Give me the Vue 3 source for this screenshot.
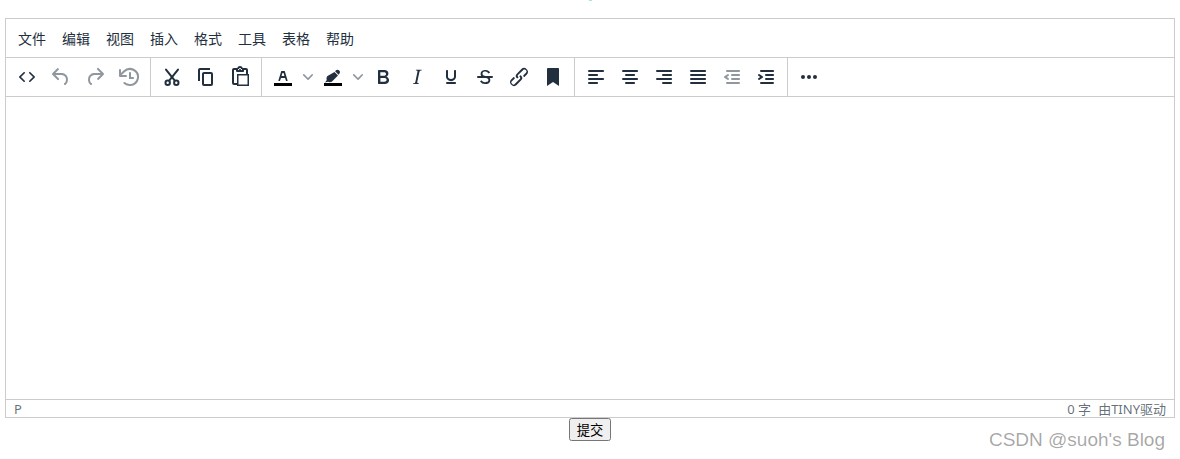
<template>
  <div class="page">
    <div class="top"><span class="top-mark"></span></div>
    <div class="editor">
      <div class="menubar">
        <button v-for="m in menus" :key="m" class="menu-item" type="button">{{ m }}</button>
      </div>
      <div class="toolbar">
        <div v-for="(group, i) in groups" :key="i" class="tool-group">
          <template v-for="tool in group" :key="tool.name">
            <span class="tool" :class="{ off: tool.off }">
              <svg width="24" height="24" viewBox="0 0 24 24">
                <rect v-if="tool.bar" x="3" y="18" width="18" height="3" fill="#000" />
                <path v-if="tool.d" :d="tool.d" />
                <g v-if="tool.name === 'cut'" class="cut-lines">
                  <circle cx="7.7" cy="17.7" r="2.2" />
                  <circle cx="16.3" cy="17.7" r="2.2" />
                  <line x1="6" y1="4.6" x2="14.6" y2="15.4" />
                  <line x1="18" y1="4.6" x2="9.4" y2="15.4" />
                </g>
              </svg>
            </span>
            <span v-if="tool.split" class="chevron">
              <svg width="10" height="10" viewBox="0 0 10 10"><path :d="chevron" /></svg>
            </span>
          </template>
        </div>
      </div>
      <div class="edit-area"></div>
      <div class="statusbar">
        <span class="path">p</span>
        <span class="status-right">
          <span class="count">0 字</span>
          <span class="brand">由TINY驱动</span>
        </span>
      </div>
    </div>
    <div class="actions">
      <button type="button" class="submit">提交</button>
    </div>
    <div class="watermark">CSDN @suoh's Blog</div>
  </div>
</template>

<script setup>
const menus = ["文件", "编辑", "视图", "插入", "格式", "工具", "表格", "帮助"];

const chevron =
  "M8.7 2.2c.3-.3.8-.3 1 0 .4.4.4.9 0 1.2L5.7 7.8c-.3.3-.9.3-1.2 0L.2 3.4a.8.8 0 0 1 0-1.2c.3-.3.8-.3 1.1 0L5 6l3.7-3.8z";

const groups = [
  [
    { name: "source", d: "M9.8 15.7c.3.3.3.8 0 1-.3.4-.9.4-1.2 0l-4.4-4.1a.8.8 0 0 1 0-1.2l4.4-4.2c.3-.3.9-.3 1.2 0 .3.3.3.8 0 1.1L6 12l3.8 3.7zM14.2 15.7c-.3.3-.3.8 0 1 .4.4.9.4 1.2 0l4.4-4.1c.3-.3.3-.9 0-1.2l-4.4-4.2a.8.8 0 0 0-1.2 0c-.3.3-.3.8 0 1.1L18 12l-3.8 3.7z" },
    { name: "undo", off: true, d: "M6.4 8H12c3.7 0 6.2 2 6.8 5.1.6 2.7-.4 5.6-2.3 6.8a1 1 0 0 1-1-1.8c1.1-.6 1.8-2.7 1.4-4.6-.5-2.1-2.1-3.5-4.9-3.5H6.4l3.3 3.3a1 1 0 1 1-1.4 1.4l-5-5a1 1 0 0 1 0-1.4l5-5a1 1 0 0 1 1.4 1.4L6.4 8z" },
    { name: "redo", off: true, d: "M17.6 10H12c-2.8 0-4.4 1.4-4.9 3.5-.4 2 .3 4 1.4 4.6a1 1 0 1 1-1 1.8c-2-1.2-2.9-4.1-2.3-6.8.6-3 3-5.1 6.8-5.1h5.6l-3.3-3.3a1 1 0 1 1 1.4-1.4l5 5a1 1 0 0 1 0 1.4l-5 5a1 1 0 0 1-1.4-1.4l3.3-3.3z" },
    { name: "restore", off: true, d: "M17 13c0 .6-.4 1-1 1h-4V8c0-.6.4-1 1-1s1 .4 1 1v4h2c.6 0 1 .4 1 1zM4.7 10H9a1 1 0 0 1 0 2H3a1 1 0 0 1-1-1V5a1 1 0 1 1 2 0v3l2.5-2.4a9.2 9.2 0 0 1 10.8-1.5A9 9 0 0 1 13.4 21c-2.4.1-4.7-.7-6.5-2.2a1 1 0 1 1 1.3-1.5 7.2 7.2 0 0 0 11.6-3.7 7 7 0 0 0-3.5-7.7A7.2 7.2 0 0 0 8 7L4.7 10z" },
  ],
  [
    { name: "cut" },
    { name: "copy", d: "M16 3H6a2 2 0 0 0-2 2v11h2V5h10V3zm1 4a2 2 0 0 1 2 2v10a2 2 0 0 1-2 2h-7a2 2 0 0 1-2-2V9c0-1.2.9-2 2-2h7zm0 12V9h-7v10h7z" },
    { name: "paste", d: "M18 9V5h-2v1c0 .6-.4 1-1 1H9a1 1 0 0 1-1-1V5H6v13h3V9h9zM9 20H6a2 2 0 0 1-2-2V5c0-1.1.9-2 2-2h3.2A3 3 0 0 1 12 1a3 3 0 0 1 2.8 2H18a2 2 0 0 1 2 2v4h1v12H9v-1zm1.5-9.5v9h9v-9h-9zM12 3a1 1 0 0 0-1 1c0 .5.4 1 1 1s1-.5 1-1-.4-1-1-1zm-2 2h4V4h-4v1z" },
  ],
  [
    { name: "forecolor", split: true, bar: true, d: "M8.7 16h-.8a.5.5 0 0 1-.5-.6l2.7-9c.1-.3.3-.4.5-.4h2.8c.2 0 .4.1.5.4l2.7 9a.5.5 0 0 1-.5.6h-.8a.5.5 0 0 1-.4-.4l-.7-2.2c0-.3-.3-.4-.5-.4h-3.4c-.2 0-.4.1-.5.4l-.7 2.2c0 .3-.2.4-.4.4zm2.6-7.6l-.6 2a.5.5 0 0 0 .5.6h1.6a.5.5 0 0 0 .5-.6l-.6-2c0-.3-.3-.4-.5-.4h-.4c-.2 0-.4.1-.5.4z" },
    { name: "backcolor", split: true, bar: true, d: "M14.8 5.6c1-1 2.4-1 3.4 0s1 2.4 0 3.4l-.7.7-3.4-3.4.7-.7zM13.5 7l3.5 3.5-6 6c-1 .8-2.5 1-4 .3l-3 .7 1.8-2.5c-.6-1.5-.2-3 .7-4L13.5 7z" },
    { name: "bold", d: "M7.8 19c-.3 0-.5 0-.6-.2l-.2-.5V5.7c0-.2 0-.4.2-.5l.6-.2h5c1.5 0 2.7.3 3.5 1 .7.6 1.1 1.4 1.1 2.5a3 3 0 0 1-.6 1.9c-.4.6-1 1-1.6 1.2.4.1.9.3 1.3.6s.8.7 1 1.2c.4.4.5 1 .5 1.6 0 1.3-.4 2.3-1.3 3-.8.7-2.1 1-3.8 1H7.8zm5-8.3c.6 0 1.2-.1 1.6-.5.4-.3.6-.7.6-1.3 0-1.1-.8-1.7-2.3-1.7H9.3v3.5h3.4zm.5 6c.7 0 1.3-.1 1.7-.4.4-.4.6-.9.6-1.5s-.2-1-.7-1.4c-.4-.3-1-.4-2-.4H9.4v3.8h4z" },
    { name: "italic", d: "M16.7 4.7l-.1.9h-.3c-.6 0-1 0-1.4.3-.3.3-.4.6-.5 1.1l-2.1 9.8v.6c0 .5.4.8 1.4.8h.2l-.2.8H8l.2-.8h.2c1.1 0 1.8-.5 2-1.5l2-9.8.1-.5c0-.6-.4-.8-1.4-.8h-.3l.2-.9h5.8z" },
    { name: "underline", d: "M16 5c.6 0 1 .4 1 1v5.5a4 4 0 0 1-.4 1.8l-1 1.4a5.3 5.3 0 0 1-5.5 1 5 5 0 0 1-1.6-1c-.5-.4-.8-.9-1.1-1.4a4 4 0 0 1-.4-1.8V6c0-.6.4-1 1-1s1 .4 1 1v5.5c0 .3 0 .6.2 1l.6.7a3.3 3.3 0 0 0 2.2.8 3.4 3.4 0 0 0 2.2-.8c.3-.2.4-.5.6-.8l.2-.9V6c0-.6.4-1 1-1zM8 17h8c.6 0 1 .4 1 1s-.4 1-1 1H8a1 1 0 0 1 0-2z" },
    { name: "strike", d: "M15.6 8.5c-.5-.7-1-1.1-1.3-1.3-.6-.4-1.3-.6-2-.6-2.7 0-2.8 1.7-2.8 2.1 0 1.6 1.8 2 3.2 2.3 4.4.9 4.6 2.8 4.6 3.9 0 1.4-.7 4.1-5 4.1A6.2 6.2 0 0 1 7 16.4l1.5-1.1c.4.6 1.6 2 3.7 2 1.6 0 2.5-.4 3-1.2.4-.8.3-2-.8-2.6-.7-.4-1.6-.7-2.9-1-1-.2-3.9-.8-3.9-3.6C7.6 6 10.3 5 12.4 5c2.9 0 4.2 1.6 4.7 2.4l-1.5 1.1zM5 11h14a1 1 0 0 1 0 2H5a1 1 0 0 1 0-2z" },
    { name: "link", d: "M6.2 12.3a1 1 0 0 1 1.4 1.4l-2.1 2a2 2 0 1 0 2.7 2.8l4.8-4.8a1 1 0 0 0 0-1.4 1 1 0 1 1 1.4-1.3 2.9 2.9 0 0 1 0 4L9.6 20a3.9 3.9 0 0 1-5.5-5.5l2-2zm11.6-.6a1 1 0 0 1-1.4-1.4l2-2a2 2 0 1 0-2.6-2.8L11 10a1 1 0 0 0 0 1.4A1 1 0 1 1 9.6 13a2.9 2.9 0 0 1 0-4L14.4 4a3.9 3.9 0 0 1 5.5 5.5l-2 2z" },
    { name: "bookmark", d: "M6 4v17l6-4 6 4V4c0-.6-.4-1-1-1H7a1 1 0 0 0-1 1z" },
  ],
  [
    { name: "left", d: "M5 5h14c.6 0 1 .4 1 1s-.4 1-1 1H5a1 1 0 1 1 0-2zm0 4h8c.6 0 1 .4 1 1s-.4 1-1 1H5a1 1 0 1 1 0-2zm0 8h8c.6 0 1 .4 1 1s-.4 1-1 1H5a1 1 0 0 1 0-2zm0-4h14c.6 0 1 .4 1 1s-.4 1-1 1H5a1 1 0 0 1 0-2z" },
    { name: "center", d: "M5 5h14c.6 0 1 .4 1 1s-.4 1-1 1H5a1 1 0 1 1 0-2zm3 4h8c.6 0 1 .4 1 1s-.4 1-1 1H8a1 1 0 1 1 0-2zm0 8h8c.6 0 1 .4 1 1s-.4 1-1 1H8a1 1 0 0 1 0-2zm-3-4h14c.6 0 1 .4 1 1s-.4 1-1 1H5a1 1 0 0 1 0-2z" },
    { name: "right", d: "M5 5h14c.6 0 1 .4 1 1s-.4 1-1 1H5a1 1 0 1 1 0-2zm6 4h8c.6 0 1 .4 1 1s-.4 1-1 1h-8a1 1 0 0 1 0-2zm0 8h8c.6 0 1 .4 1 1s-.4 1-1 1h-8a1 1 0 0 1 0-2zm-6-4h14c.6 0 1 .4 1 1s-.4 1-1 1H5a1 1 0 0 1 0-2z" },
    { name: "justify", d: "M5 5h14c.6 0 1 .4 1 1s-.4 1-1 1H5a1 1 0 1 1 0-2zm0 4h14c.6 0 1 .4 1 1s-.4 1-1 1H5a1 1 0 1 1 0-2zm0 4h14c.6 0 1 .4 1 1s-.4 1-1 1H5a1 1 0 0 1 0-2zm0 4h14c.6 0 1 .4 1 1s-.4 1-1 1H5a1 1 0 0 1 0-2z" },
    { name: "outdent", off: true, d: "M7 5h12c.6 0 1 .4 1 1s-.4 1-1 1H7a1 1 0 1 1 0-2zm5 4h7c.6 0 1 .4 1 1s-.4 1-1 1h-7a1 1 0 0 1 0-2zm0 4h7c.6 0 1 .4 1 1s-.4 1-1 1h-7a1 1 0 0 1 0-2zm-5 4h12a1 1 0 0 1 0 2H7a1 1 0 0 1 0-2zm1.6-3.8a1 1 0 0 1-1.2 1.6l-3-2a1 1 0 0 1 0-1.6l3-2a1 1 0 0 1 1.2 1.6L6.8 12l1.8 1.2z" },
    { name: "indent", d: "M7 5h12c.6 0 1 .4 1 1s-.4 1-1 1H7a1 1 0 1 1 0-2zm5 4h7c.6 0 1 .4 1 1s-.4 1-1 1h-7a1 1 0 0 1 0-2zm0 4h7c.6 0 1 .4 1 1s-.4 1-1 1h-7a1 1 0 0 1 0-2zm-5 4h12a1 1 0 0 1 0 2H7a1 1 0 0 1 0-2zm-2.6-3.8L6.2 12l-1.8-1.2a1 1 0 0 1 1.2-1.6l3 2a1 1 0 0 1 0 1.6l-3 2a1 1 0 1 1-1.2-1.6z" },
  ],
  [
    { name: "more", d: "M6 10a2 2 0 0 0-2 2c0 1.1.9 2 2 2a2 2 0 0 0 2-2 2 2 0 0 0-2-2zm12 0a2 2 0 0 0-2 2c0 1.1.9 2 2 2a2 2 0 0 0 2-2 2 2 0 0 0-2-2zm-6 0a2 2 0 0 0-2 2c0 1.1.9 2 2 2a2 2 0 0 0 2-2 2 2 0 0 0-2-2z" },
  ],
];
</script>

<style scoped>
.page {
  position: relative;
  height: 459px;
  padding: 0 5px;
  box-sizing: border-box;
  overflow: hidden;
  font-family: "Noto Sans", "Noto Sans CJK SC", sans-serif;
}
.top {
  height: 18px;
  display: flex;
  justify-content: center;
}
.top-mark {
  width: 3px;
  height: 1px;
  background: #a6e8d2;
}
.editor {
  height: 400px;
  box-sizing: border-box;
  border: 1px solid #ccc;
  display: flex;
  flex-direction: column;
}
.menubar {
  display: flex;
  padding: 0 4px;
  height: 38px;
  flex-shrink: 0;
}
.menu-item {
  height: 34px;
  margin: 2px 0;
  padding: 0 8px;
  border: 0;
  background: none;
  color: #222f3e;
  font-family: "Noto Sans CJK SC", sans-serif;
  font-size: 14px;
  line-height: 34px;
}
.toolbar {
  display: flex;
  height: 38px;
  flex-shrink: 0;
  border-top: 1px solid #ccc;
  border-bottom: 1px solid #ccc;
}
.tool-group {
  display: flex;
  padding: 0 4px;
  border-right: 1px solid #ccc;
}
.tool-group:last-child {
  border-right: 0;
}
.tool {
  width: 34px;
  height: 34px;
  margin: 2px 0;
  display: flex;
  align-items: center;
  justify-content: center;
  fill: #222f3e;
}
.tool.off {
  fill: rgba(34, 47, 62, 0.5);
}
.cut-lines {
  fill: none;
  stroke: #222f3e;
  stroke-width: 2;
  stroke-linecap: round;
}
.chevron {
  width: 16px;
  height: 34px;
  margin: 2px 0;
  display: flex;
  align-items: center;
  justify-content: center;
  fill: rgba(34, 47, 62, 0.5);
}
.edit-area {
  flex: 1;
  background: #fff;
}
.statusbar {
  height: 17px;
  flex-shrink: 0;
  border-top: 1px solid #ccc;
  padding: 0 8px;
  display: flex;
  justify-content: space-between;
  align-items: center;
  font-size: 13px;
  color: rgba(34, 47, 62, 0.7);
}
.path {
  text-transform: uppercase;
}
.brand {
  margin-left: 7px;
}
.actions {
  text-align: center;
}
.submit {
  font-family: "Noto Sans CJK SC", sans-serif;
  line-height: 17px;
  vertical-align: top;
}
.watermark {
  position: absolute;
  right: 15px;
  top: 429px;
  font-family: "Liberation Sans", sans-serif;
  font-size: 19px;
  color: rgba(0, 0, 0, 0.36);
}
</style>
